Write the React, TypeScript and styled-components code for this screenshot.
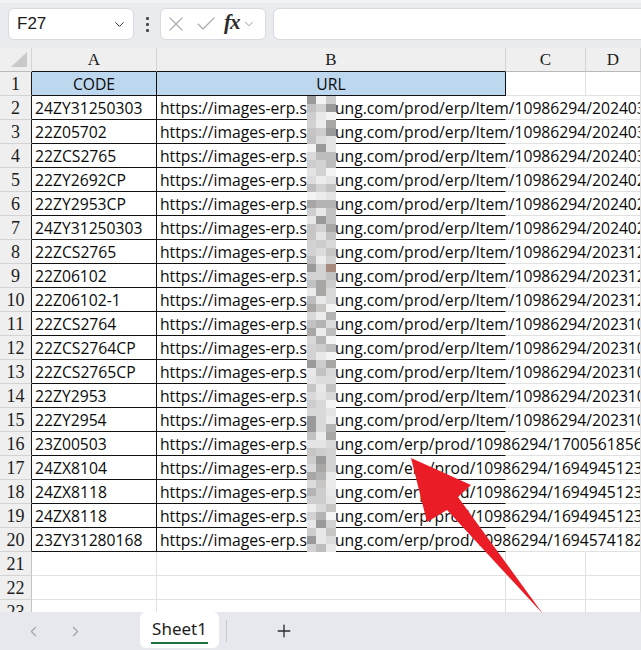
import React from "react";
import styled, { createGlobalStyle } from "styled-components";
import { X, Check, ChevronDown, ChevronLeft, ChevronRight, Plus } from "lucide-react";

const GlobalStyle = createGlobalStyle`
  html, body {
    margin: 0;
    padding: 0;
    overflow: hidden;
    background: #ffffff;
  }
  body {
    font-family: "Open Sans", "Noto Sans", sans-serif;
    color: #111;
  }
`;

const Page = styled.div`
  position: relative;
  width: 641px;
  height: 650px;
  display: flex;
  flex-direction: column;
  overflow: hidden;
`;

/* ---------- formula toolbar ---------- */

const Toolbar = styled.div`
  height: 48px;
  flex: none;
  box-sizing: border-box;
  background: #e9ebef;
  border-top: 3px solid #f1f2f5;
  display: flex;
  align-items: flex-start;
  padding: 5px 0 0 8px;
`;

const Field = styled.div`
  box-sizing: border-box;
  height: 32px;
  background: #fff;
  border: 1px solid #d7dae0;
  border-radius: 6px;
  display: flex;
  align-items: center;
`;

const NameBox = styled(Field)`
  width: 126px;
  padding: 0 6px 0 8px;
  justify-content: space-between;
  font-family: "Liberation Sans", Arial, sans-serif;
  font-size: 17px;
  color: #1a1a1a;
`;

const Handle = styled.div`
  width: 26px;
  height: 32px;
  display: flex;
  flex-direction: column;
  align-items: center;
  justify-content: center;
  gap: 3px;
`;

const Dot = styled.span`
  width: 3px;
  height: 3px;
  border-radius: 1px;
  background: #4a4a4a;
`;

const FxBox = styled(Field)`
  width: 106px;
  padding-left: 3px;
  gap: 1px;
  color: #a9a9a9;
`;

const FxMark = styled.span`
  font-family: "Liberation Serif", "Times New Roman", serif;
  font-style: italic;
  font-weight: bold;
  font-size: 21px;
  color: #2b2b2b;
  margin: -3px 1px 0 5px;
  letter-spacing: -1px;
`;

const FormulaInput = styled(Field)`
  flex: 1;
  margin-left: 7px;
  border-right: none;
  border-radius: 6px 0 0 6px;
`;

/* ---------- sheet grid ---------- */

const Sheet = styled.div`
  flex: 1;
  overflow: hidden;
  background: #fff;
`;

const Grid = styled.div`
  display: grid;
  grid-template-columns: 32px 125px 349px 80px 55px;
  grid-auto-rows: 24px;
`;

const Cell = styled.div<{ $bottom?: string; $right?: string; $fill?: string; $center?: boolean }>`
  box-sizing: border-box;
  border-right: 1px solid ${(p) => p.$right || "#e1e1e1"};
  border-bottom: 1px solid ${(p) => p.$bottom || "#e1e1e1"};
  background: ${(p) => p.$fill || "transparent"};
  display: flex;
  align-items: center;
  justify-content: ${(p) => (p.$center ? "center" : "flex-start")};
  padding-left: ${(p) => (p.$center ? "0" : "3px")};
  font-size: 15.7px;
  white-space: nowrap;
  overflow: visible;
  color: #0a0a0a;
`;

const HeadCell = styled.div<{ $bottom?: string }>`
  box-sizing: border-box;
  background: #efefef;
  border-right: 1px solid #d3d3d3;
  border-bottom: 1px solid ${(p) => p.$bottom || "#b9b9b9"};
  display: flex;
  align-items: center;
  justify-content: center;
  font-family: "Liberation Serif", "Times New Roman", serif;
  font-size: 17px;
  color: #1c1c1c;
  padding-top: 1px;
`;

const Corner = styled(HeadCell)`
  position: relative;
  &::after {
    content: "";
    position: absolute;
    right: 4px;
    bottom: 4px;
    width: 16px;
    height: 15px;
    background: #c9c9c9;
    clip-path: polygon(100% 0, 100% 100%, 0 100%);
  }
`;

const RowHead = styled(HeadCell)<{ $edge?: boolean }>`
  border-bottom: 1px solid #d3d3d3;
  border-right: 1px solid ${(p) => (p.$edge ? "#1a1a1a" : "#c4c4c4")};
  font-size: 18px;
`;

/* ---------- redaction + arrow overlay ---------- */

const Mosaic = styled.div`
  position: absolute;
  left: 307px;
  top: 96px;
  display: grid;
  grid-template-columns: 9px 10px 10px;
  grid-auto-rows: 8px;
  pointer-events: none;
`;

const Tile = styled.div<{ $c: string }>`
  background: ${(p) => p.$c};
`;

const ArrowLayer = styled.svg`
  position: absolute;
  left: 0;
  top: 0;
  pointer-events: none;
`;

/* ---------- sheet tabs ---------- */

const TabBar = styled.div`
  height: 38px;
  flex: none;
  background: #e7e8ed;
  display: flex;
  align-items: flex-start;
  padding-left: 25px;
  color: #a3a3a3;
`;

const NavButton = styled.div`
  height: 38px;
  display: flex;
  align-items: center;
  margin-right: 25px;
`;

const Tab = styled.div`
  margin-left: 31px;
  width: 79px;
  height: 36px;
  background: #fff;
  border-radius: 6px;
  display: flex;
  flex-direction: column;
  align-items: center;
  justify-content: center;
  font-family: "Noto Sans", "Open Sans", sans-serif;
  font-size: 17px;
  color: #1d1d1d;
`;

const TabLabel = styled.span`
  padding: 0 1px 1px;
  border-bottom: 2px solid #1e7145;
  line-height: 24px;
`;

const Divider = styled.div`
  width: 1px;
  height: 22px;
  margin: 8px 0 0 7px;
  background: #c6c8cd;
`;

const AddButton = styled.div`
  height: 38px;
  margin-left: 47px;
  display: flex;
  align-items: center;
  color: #2a2a2a;
`;

const codes = [
  "24ZY31250303", "22Z05702", "22ZCS2765", "22ZY2692CP", "22ZY2953CP",
  "24ZY31250303", "22ZCS2765", "22Z06102", "22Z06102-1", "22ZCS2764",
  "22ZCS2764CP", "22ZCS2765CP", "22ZY2953", "22ZY2954", "23Z00503",
  "24ZX8104", "24ZX8118", "24ZX8118", "23ZY31280168",
];

const tails = [
  "prod/erp/Item/10986294/20240305114532.jpg",
  "prod/erp/Item/10986294/20240305114601.jpg",
  "prod/erp/Item/10986294/20240305114622.jpg",
  "prod/erp/Item/10986294/20240226093017.jpg",
  "prod/erp/Item/10986294/20240226093105.jpg",
  "prod/erp/Item/10986294/20240226093141.jpg",
  "prod/erp/Item/10986294/20231218152206.jpg",
  "prod/erp/Item/10986294/20231218152244.jpg",
  "prod/erp/Item/10986294/20231218152319.jpg",
  "prod/erp/Item/10986294/20231025101455.jpg",
  "prod/erp/Item/10986294/20231025101532.jpg",
  "prod/erp/Item/10986294/20231025101610.jpg",
  "prod/erp/Item/10986294/20231025101648.jpg",
  "prod/erp/Item/10986294/20231025101723.jpg",
  "erp/prod/10986294/1700561856417.jpg",
  "erp/prod/10986294/1694945123760.jpg",
  "erp/prod/10986294/1694945123812.jpg",
  "erp/prod/10986294/1694945123905.jpg",
  "erp/prod/10986294/1694574182236.jpg",
];

const palette = [
  "#d9d9d9", "#cdcdcd", "#e4e4e4", "#c2c2c2", "#ececec",
  "#b4b4b4", "#d2d2d2", "#9a9a9a", "#f3f3f3", "#c8c6c4",
  "#dcdcdc", "#a9a7a6", "#a88a7c", "#e8e8e8", "#bdbdbd",
];

// deterministic pixel mosaic that covers part of the domain name
const mosaic = (() => {
  let seed = 7;
  const out: string[] = [];
  for (let i = 0; i < 57 * 3; i++) {
    seed = (seed * 9301 + 49297) % 233280;
    const r = seed / 233280;
    let idx = Math.floor(r * palette.length);
    if (palette[idx] === "#a88a7c" && i % 5 !== 0) idx = 0;
    out.push(palette[idx]);
  }
  return out;
})();

const BLACK = "#111";

const App: React.FC = () => {
  const letters = ["A", "B", "C", "D"];
  return (
    <Page>
      <GlobalStyle />
      <Toolbar>
        <NameBox>
          <span>F27</span>
          <ChevronDown size={15} strokeWidth={1.6} color="#333" />
        </NameBox>
        <Handle>
          <Dot />
          <Dot />
          <Dot />
        </Handle>
        <FxBox>
          <X size={24} strokeWidth={1.1} />
          <Check size={24} strokeWidth={1.1} style={{ marginLeft: 5 }} />
          <FxMark>fx</FxMark>
          <ChevronDown size={14} strokeWidth={1.4} color="#888" />
        </FxBox>
        <FormulaInput />
      </Toolbar>

      <Sheet>
        <Grid>
          <Corner />
          {letters.map((l, i) => (
            <HeadCell key={l} $bottom={i < 2 ? BLACK : undefined}>
              {l}
            </HeadCell>
          ))}

          <RowHead $edge>1</RowHead>
          <Cell $center $fill="#bdd7ee" $right={BLACK} $bottom={BLACK}>
            CODE
          </Cell>
          <Cell $center $fill="#bdd7ee" $right={BLACK} $bottom={BLACK}>
            URL
          </Cell>
          <Cell />
          <Cell />

          {codes.map((code, i) => (
            <React.Fragment key={i}>
              <RowHead $edge>{i + 2}</RowHead>
              <Cell $right={BLACK} $bottom={BLACK}>
                {code}
              </Cell>
              <Cell $right="transparent" $bottom={BLACK}>
                {"https://images-erp.shanung.com/" + tails[i]}
              </Cell>
              <Cell $right="transparent" />
              <Cell />
            </React.Fragment>
          ))}

          {[21, 22, 23].map((n) => (
            <React.Fragment key={n}>
              <RowHead>{n}</RowHead>
              <Cell />
              <Cell />
              <Cell />
              <Cell />
            </React.Fragment>
          ))}
        </Grid>
      </Sheet>

      <TabBar>
        <NavButton>
          <ChevronLeft size={17} strokeWidth={1.5} />
        </NavButton>
        <NavButton>
          <ChevronRight size={17} strokeWidth={1.5} />
        </NavButton>
        <Tab>
          <TabLabel>Sheet1</TabLabel>
        </Tab>
        <Divider />
        <AddButton>
          <Plus size={20} strokeWidth={1.6} />
        </AddButton>
      </TabBar>

      <Mosaic>
        {mosaic.map((c, i) => (
          <Tile key={i} $c={c} />
        ))}
      </Mosaic>

      <ArrowLayer width={641} height={650} viewBox="0 0 641 650">
        <polygon
          points="411,458 471,485 458,497 543,614 447,510 427,522"
          fill="#ea1d26"
        />
      </ArrowLayer>
    </Page>
  );
};

export default App;
